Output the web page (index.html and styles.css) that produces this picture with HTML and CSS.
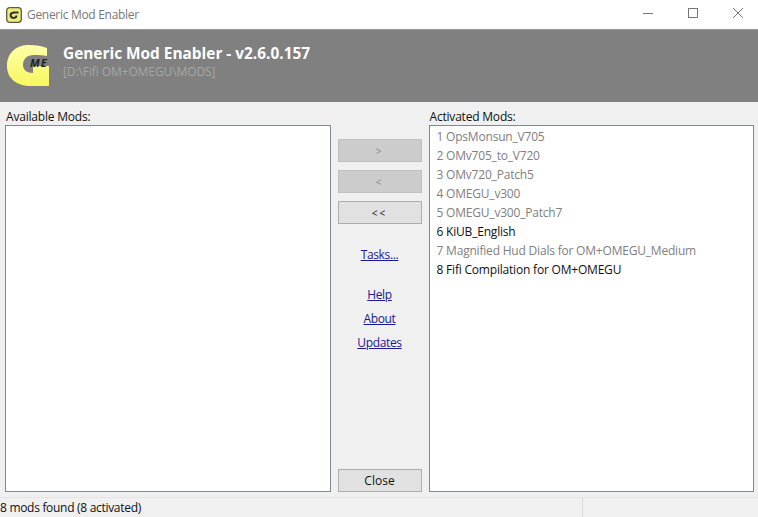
FILE: index.html
```html
<!DOCTYPE html>
<html>
<head>
    <title>Generic Mod Enabler</title>
    <link rel="stylesheet" href="styles.css">
</head>
<body>
    <div class="titlebar">
        <svg class="app-icon" width="16" height="16" viewBox="0 0 16 16">
            <rect x="0.7" y="0.7" width="14.6" height="14.6" rx="3" fill="#eeee7c" stroke="#5c5c3c" stroke-width="1.3"/>
            <path d="M12.5 5.6 H8.5 C6 5.6 4.6 6.6 4.6 8.2 C4.6 10 6 10.9 8 10.9 C9.6 10.9 10.4 10.2 10.4 8.6" fill="none" stroke="#333" stroke-width="2"/>
        </svg>
        <span class="app-name">Generic Mod Enabler</span>
        <div class="window-buttons">
            <svg width="10" height="10" viewBox="0 0 10 10"><path d="M0 5.5H10" stroke="#777" fill="none"/></svg>
            <svg width="10" height="10" viewBox="0 0 10 10"><rect x="0.5" y="0.5" width="9" height="9" stroke="#777" fill="none"/></svg>
            <svg width="10" height="10" viewBox="0 0 10 10"><path d="M0 0L10 10M10 0L0 10" stroke="#777" fill="none"/></svg>
        </div>
    </div>

    <div class="banner">
        <div class="logo">
            <svg width="43" height="42" viewBox="0 0 43 42">
                <defs>
                    <linearGradient id="logo-fill" x1="0" y1="0" x2="0" y2="1">
                        <stop offset="0" stop-color="#ffffa8"/>
                        <stop offset="1" stop-color="#f7f760"/>
                    </linearGradient>
                </defs>
                <path d="M22 0 C29 0 35 1 40 3 V11 C36 10.4 31 10 27 10 C20 10 16 14 16 20 C16 25 20 28 26 28 V21 H42 V41 H24 C9 41 0 33 0 21 C0 8 9 0 22 0 Z" fill="url(#logo-fill)"/>
            </svg>
            <span class="logo-me">ME</span>
        </div>
        <div class="banner-text">
            <div class="banner-title">Generic Mod Enabler - v2.6.0.157</div>
            <div class="banner-path">[D:\Fifi OM+OMEGU\MODS]</div>
        </div>
    </div>

    <div class="main">
        <div class="column">
            <div class="list-label">Available Mods:</div>
            <div class="list"></div>
        </div>

        <div class="actions">
            <button class="btn btn-arrow" disabled>&gt;</button>
            <button class="btn btn-arrow" disabled>&lt;</button>
            <button class="btn btn-arrow">&lt;&lt;</button>
            <a class="link link-tasks" href="#">Tasks...</a>
            <a class="link link-help" href="#">Help</a>
            <a class="link" href="#">About</a>
            <a class="link" href="#">Updates</a>
            <button class="btn btn-close">Close</button>
        </div>

        <div class="column">
            <div class="list-label">Activated Mods:</div>
            <div class="list">
                <div class="mod">1 OpsMonsun_V705</div>
                <div class="mod">2 OMv705_to_V720</div>
                <div class="mod">3 OMv720_Patch5</div>
                <div class="mod">4 OMEGU_v300</div>
                <div class="mod">5 OMEGU_v300_Patch7</div>
                <div class="mod mod-on">6 KiUB_English</div>
                <div class="mod">7 Magnified Hud Dials for OM+OMEGU_Medium</div>
                <div class="mod mod-on">8 Fifi Compilation for OM+OMEGU</div>
            </div>
        </div>
    </div>

    <div class="statusbar">
        <span class="status-text">8 mods found (8 activated)</span>
        <span class="status-end"></span>
    </div>
</body>
</html>
```

FILE: styles.css
```css
html, body {
    margin: 0;
    height: 517px;
    overflow: hidden;
}
body {
    display: flex;
    flex-direction: column;
    background-color: #f0f0f0;
    color: #111;
    font-family: "Open Sans", "Noto Sans", sans-serif;
    font-size: 12px;
    letter-spacing: -0.2px;
}
.titlebar {
    height: 29px;
    display: flex;
    align-items: center;
    background-color: white;
    padding-left: 6px;
    box-sizing: border-box;
}
.app-icon {
    margin-right: 5px;
}
.app-name {
    color: #777;
    letter-spacing: -0.3px;
}
.window-buttons {
    margin-left: auto;
    display: flex;
    gap: 35px;
    padding: 0 15px 3px 0;
}
.banner {
    height: 73px;
    display: flex;
    background-color: #808080;
    border-top: 1px solid #999;
    box-sizing: border-box;
    padding-left: 7px;
}
.logo {
    position: relative;
    width: 43px;
    height: 42px;
    margin: 15px 13px 0 0;
}
.logo-me {
    position: absolute;
    left: 23px;
    top: 10px;
    font-size: 11px;
    font-weight: bold;
    font-style: italic;
    letter-spacing: 1px;
    color: #222;
}
.banner-text {
    margin-top: 15px;
}
.banner-title {
    color: white;
    font-size: 15.4px;
    font-weight: bold;
    line-height: 17px;
    letter-spacing: 0;
}
.banner-path {
    color: #a6a6a6;
    line-height: 20px;
    letter-spacing: -0.1px;
}
.main {
    flex: 1;
    display: flex;
    padding: 7px 4px 5px 5px;
    min-height: 0;
}
.column {
    flex: 1;
    display: flex;
    flex-direction: column;
}
.list-label {
    line-height: 16px;
    padding-left: 1px;
}
.list {
    flex: 1;
    background-color: white;
    border: 1px solid #828790;
    padding: 1px 7px;
}
.mod {
    color: #808080;
    line-height: 19px;
}
.mod-on {
    color: #111;
}
.actions {
    width: 84px;
    margin: 0 7px;
    padding-top: 30px;
    display: flex;
    flex-direction: column;
    align-items: center;
}
.btn {
    width: 84px;
    height: 23px;
    margin-bottom: 8px;
    padding: 0;
    background-color: #e1e1e1;
    border: 1px solid #adadad;
    color: #111;
    font-family: inherit;
    font-size: 12px;
}
.btn-arrow {
    font-size: 10px;
    letter-spacing: 2px;
}
.btn:disabled {
    background-color: #cccccc;
    border-color: #bfbfbf;
    color: #8a8a8a;
}
.btn-close {
    margin-top: auto;
    margin-bottom: 0;
}
.link {
    color: #1a1a8c;
    line-height: 16px;
    margin-bottom: 8px;
    letter-spacing: -0.35px;
}
.link-tasks {
    margin-top: 15px;
}
.link-help {
    margin-top: 16px;
}
.statusbar {
    height: 20px;
    display: flex;
    align-items: center;
    border-top: 1px solid #e3e3e3;
    box-sizing: border-box;
}
.status-text {
    width: 582px;
    border-right: 1px solid #d9d9d9;
    line-height: 19px;
    letter-spacing: -0.3px;
}
```
